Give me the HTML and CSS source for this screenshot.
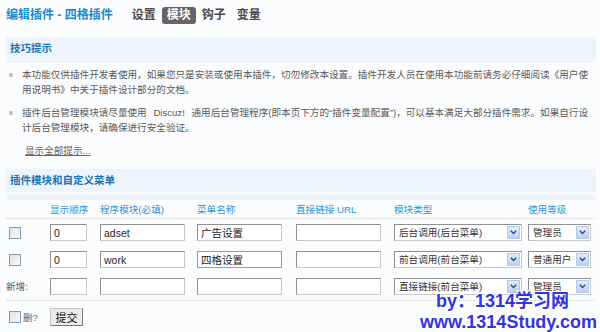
FILE: index.html
```html
<!DOCTYPE html>
<html lang="zh-CN">
<head>
    <meta charset="UTF-8">
    <title>编辑插件 - 四格插件</title>
    <link rel="stylesheet" href="styles.css">
</head>
<body>

    <div class="page">
        <div class="top">
            <h1 class="title">编辑插件 - 四格插件</h1>
            <ul class="tabs">
                <li>设置</li>
                <li class="on">模块</li>
                <li>钩子</li>
                <li>变量</li>
            </ul>
        </div>

        <!-- 技巧提示 -->
        <div class="sec-head">技巧提示</div>
        <div class="sec-line"></div>
        <ul class="tips">
            <li>本功能仅供插件开发者使用，如果您只是安装或使用本插件，切勿修改本设置。插件开发人员在使用本功能前请务必仔细阅读《用户使用说明书》中关于插件设计部分的文档。</li>
            <li>插件后台管理模块请尽量使用 Discuz! 通用后台管理程序(即本页下方的“插件变量配置”)，可以基本满足大部分插件需求。如果自行设计后台管理模块，请确保进行安全验证。</li>
        </ul>
        <a class="more" href="#">显示全部提示...</a>

        <!-- 模块列表 -->
        <div class="sec-head sec-head2">插件模块和自定义菜单</div>
        <div class="sec-sub"></div>

        <form class="grid" action="#" method="post">
            <div class="row head">
                <span></span>
                <span>显示顺序</span>
                <span>程序模块(必填)</span>
                <span>菜单名称</span>
                <span>直接链接 URL</span>
                <span>模块类型</span>
                <span>使用等级</span>
            </div>

            <div class="row">
                <span><input type="checkbox" class="chk"></span>
                <span><input type="text" class="ipt w-ord" value="0"></span>
                <span><input type="text" class="ipt w-txt" value="adset"></span>
                <span><input type="text" class="ipt w-txt" value="广告设置"></span>
                <span><input type="text" class="ipt w-txt" value=""></span>
                <span>
                    <span class="sel w-type">
                        <select><option>后台调用(后台菜单)</option></select>
                        <i class="arrow"><svg width="7" height="5" viewBox="0 0 7 5"><path d="M0.8 0.8 L3.5 3.6 L6.2 0.8" fill="none" stroke="#2a4888" stroke-width="1.4"/></svg></i>
                    </span>
                </span>
                <span>
                    <span class="sel w-level">
                        <select><option>管理员</option></select>
                        <i class="arrow"><svg width="7" height="5" viewBox="0 0 7 5"><path d="M0.8 0.8 L3.5 3.6 L6.2 0.8" fill="none" stroke="#2a4888" stroke-width="1.4"/></svg></i>
                    </span>
                </span>
            </div>

            <div class="row">
                <span><input type="checkbox" class="chk"></span>
                <span><input type="text" class="ipt w-ord" value="0"></span>
                <span><input type="text" class="ipt w-txt" value="work"></span>
                <span><input type="text" class="ipt w-txt focus" value="四格设置"></span>
                <span><input type="text" class="ipt w-txt" value=""></span>
                <span>
                    <span class="sel w-type">
                        <select><option>前台调用(前台菜单)</option></select>
                        <i class="arrow"><svg width="7" height="5" viewBox="0 0 7 5"><path d="M0.8 0.8 L3.5 3.6 L6.2 0.8" fill="none" stroke="#2a4888" stroke-width="1.4"/></svg></i>
                    </span>
                </span>
                <span>
                    <span class="sel w-level">
                        <select><option>普通用户</option></select>
                        <i class="arrow"><svg width="7" height="5" viewBox="0 0 7 5"><path d="M0.8 0.8 L3.5 3.6 L6.2 0.8" fill="none" stroke="#2a4888" stroke-width="1.4"/></svg></i>
                    </span>
                </span>
            </div>

            <div class="row last">
                <span class="label">新增:</span>
                <span><input type="text" class="ipt w-ord" value=""></span>
                <span><input type="text" class="ipt w-txt" value=""></span>
                <span><input type="text" class="ipt w-txt" value=""></span>
                <span><input type="text" class="ipt w-txt" value=""></span>
                <span>
                    <span class="sel w-type">
                        <select><option>直接链接(前台菜单)</option></select>
                        <i class="arrow"><svg width="7" height="5" viewBox="0 0 7 5"><path d="M0.8 0.8 L3.5 3.6 L6.2 0.8" fill="none" stroke="#2a4888" stroke-width="1.4"/></svg></i>
                    </span>
                </span>
                <span>
                    <span class="sel w-level">
                        <select><option>管理员</option></select>
                        <i class="arrow"><svg width="7" height="5" viewBox="0 0 7 5"><path d="M0.8 0.8 L3.5 3.6 L6.2 0.8" fill="none" stroke="#2a4888" stroke-width="1.4"/></svg></i>
                    </span>
                </span>
            </div>

            <div class="row foot">
                <span class="del"><input type="checkbox" class="chk"><label>删?</label></span>
                <span><button type="submit" class="btn">提交</button></span>
            </div>
        </form>
    </div>

    <!-- 水印 -->
    <div class="watermark">
        <p class="wm1">by：1314学习网</p>
        <p class="wm2">www.1314Study.com</p>
    </div>

</body>
</html>
```

FILE: styles.css
```css
body {
    margin: 0;
    background-color: #fbfcfd;
    font-family: "Liberation Sans", "Noto Sans CJK SC", sans-serif;
    font-size: 9.6px;
    line-height: 15px;
    color: #5a5a5a;
    position: relative;
    height: 332px;
    overflow: hidden;
}

.page {
    padding: 0 4px 0 6px;
}

.top {
    display: flex;
    align-items: center;
    height: 30px;
    margin-bottom: 7px;
}

.title {
    margin: 0;
    font-size: 12px;
    font-weight: bold;
    color: #1a8bcf;
}

.tabs {
    list-style: none;
    margin: 0 0 0 14px;
    padding: 0;
    display: flex;
    gap: 1px;
}

.tabs li {
    padding: 0 5px;
    height: 17px;
    line-height: 17px;
    font-size: 12px;
    font-weight: bold;
    color: #4a4a4a;
    border-radius: 3px;
}

.tabs li.on {
    background-color: #666;
    color: #fff;
}

.sec-head {
    height: 23px;
    line-height: 23px;
    padding-left: 4px;
    background-color: #edf4fc;
    font-size: 10.5px;
    font-weight: bold;
    color: #1a74b4;
}

.sec-line {
    height: 1px;
    margin-top: 1px;
    background-color: #e4ecf5;
}

.tips {
    list-style: none;
    margin: 5px 0 0;
    padding: 0 0 0 3px;
    width: 583px;
    word-spacing: 4px;
}

.tips li {
    display: flex;
    gap: 9px;
    margin-bottom: 8px;
}

.tips li::before {
    content: "";
    flex: none;
    width: 4px;
    height: 4px;
    margin-top: 6px;
    background-color: #c4c4c4;
    border-radius: 1px;
}

.more {
    display: inline-block;
    margin-left: 19px;
    color: #666;
    text-decoration: underline;
}

.sec-head2 {
    margin-top: 11px;
}

.sec-sub {
    height: 6px;
    margin-top: 2px;
    background-color: #edf4fc;
}

.row {
    display: grid;
    grid-template-columns: 44px 50px 97px 99px 98px 134px 68px;
    align-items: center;
    height: 27px;
}

.row.head {
    height: 18px;
    border-bottom: 1px dotted #c9d5e2;
    color: #2d95d8;
}

.row.last {
    border-bottom: 1px dotted #c9d5e2;
}

.row.foot {
    height: 32px;
}

.chk {
    appearance: none;
    box-sizing: border-box;
    width: 12px;
    height: 12px;
    margin: 0 0 0 3px;
    border: 1px solid #7f9db9;
    background: linear-gradient(135deg, #dcdfe4, #fcfcfc);
    vertical-align: middle;
}

.label {
    color: #555;
}

.ipt {
    box-sizing: border-box;
    height: 17px;
    padding: 0 3px;
    border: 1px solid;
    border-color: #8f8f8f #c8c8c8 #c8c8c8 #8f8f8f;
    background-color: #fff;
    font-family: "Liberation Sans", "Noto Sans CJK SC", sans-serif;
    font-size: 10.5px;
    color: #222;
    outline: none;
    display: block;
}

.ipt.focus {
    border-color: #6aa7e0;
}

.w-ord {
    width: 37px;
}

.w-txt {
    width: 85px;
}

.sel {
    position: relative;
    display: block;
}

.w-type {
    width: 128px;
}

.w-level {
    width: 63px;
}

.sel select {
    appearance: none;
    box-sizing: border-box;
    width: 100%;
    height: 17px;
    padding: 0 0 0 4px;
    border: 1px solid;
    border-color: #8f8f8f #c8c8c8 #c8c8c8 #8f8f8f;
    border-radius: 0;
    background-color: #fff;
    font-family: "Liberation Sans", "Noto Sans CJK SC", sans-serif;
    font-size: 9.6px;
    color: #333;
    outline: none;
    display: block;
}

.sel .arrow {
    position: absolute;
    right: 2px;
    top: 2px;
    width: 13px;
    height: 13px;
    box-sizing: border-box;
    border: 1px solid #b4c8ea;
    background: linear-gradient(#e2ecfc, #bcd1f3);
    display: flex;
    align-items: center;
    justify-content: center;
    pointer-events: none;
}

.del {
    display: flex;
    align-items: center;
    gap: 2px;
}

.del label {
    color: #666;
}

.btn {
    box-sizing: border-box;
    width: 33px;
    height: 18px;
    padding: 0;
    border: 1px solid;
    border-color: #c5c5c5 #7a7a7a #7a7a7a #c5c5c5;
    background-color: #ececec;
    font-family: "Liberation Sans", "Noto Sans CJK SC", sans-serif;
    font-size: 11px;
    color: #111;
    cursor: pointer;
}

.watermark {
    position: absolute;
    left: 420px;
    top: 291px;
    font-family: "Liberation Sans", "Noto Sans CJK SC", sans-serif;
    font-size: 18px;
    line-height: 21px;
    font-weight: bold;
    color: #3333e4;
    text-shadow: 0 0 2px #fff, 1px 1px 0 #fff, -1px -1px 0 #fff, 1px -1px 0 #fff, -1px 1px 0 #fff;
}

.watermark p {
    margin: 0;
    white-space: nowrap;
}

.wm1 {
    padding-left: 16px;
}
```
